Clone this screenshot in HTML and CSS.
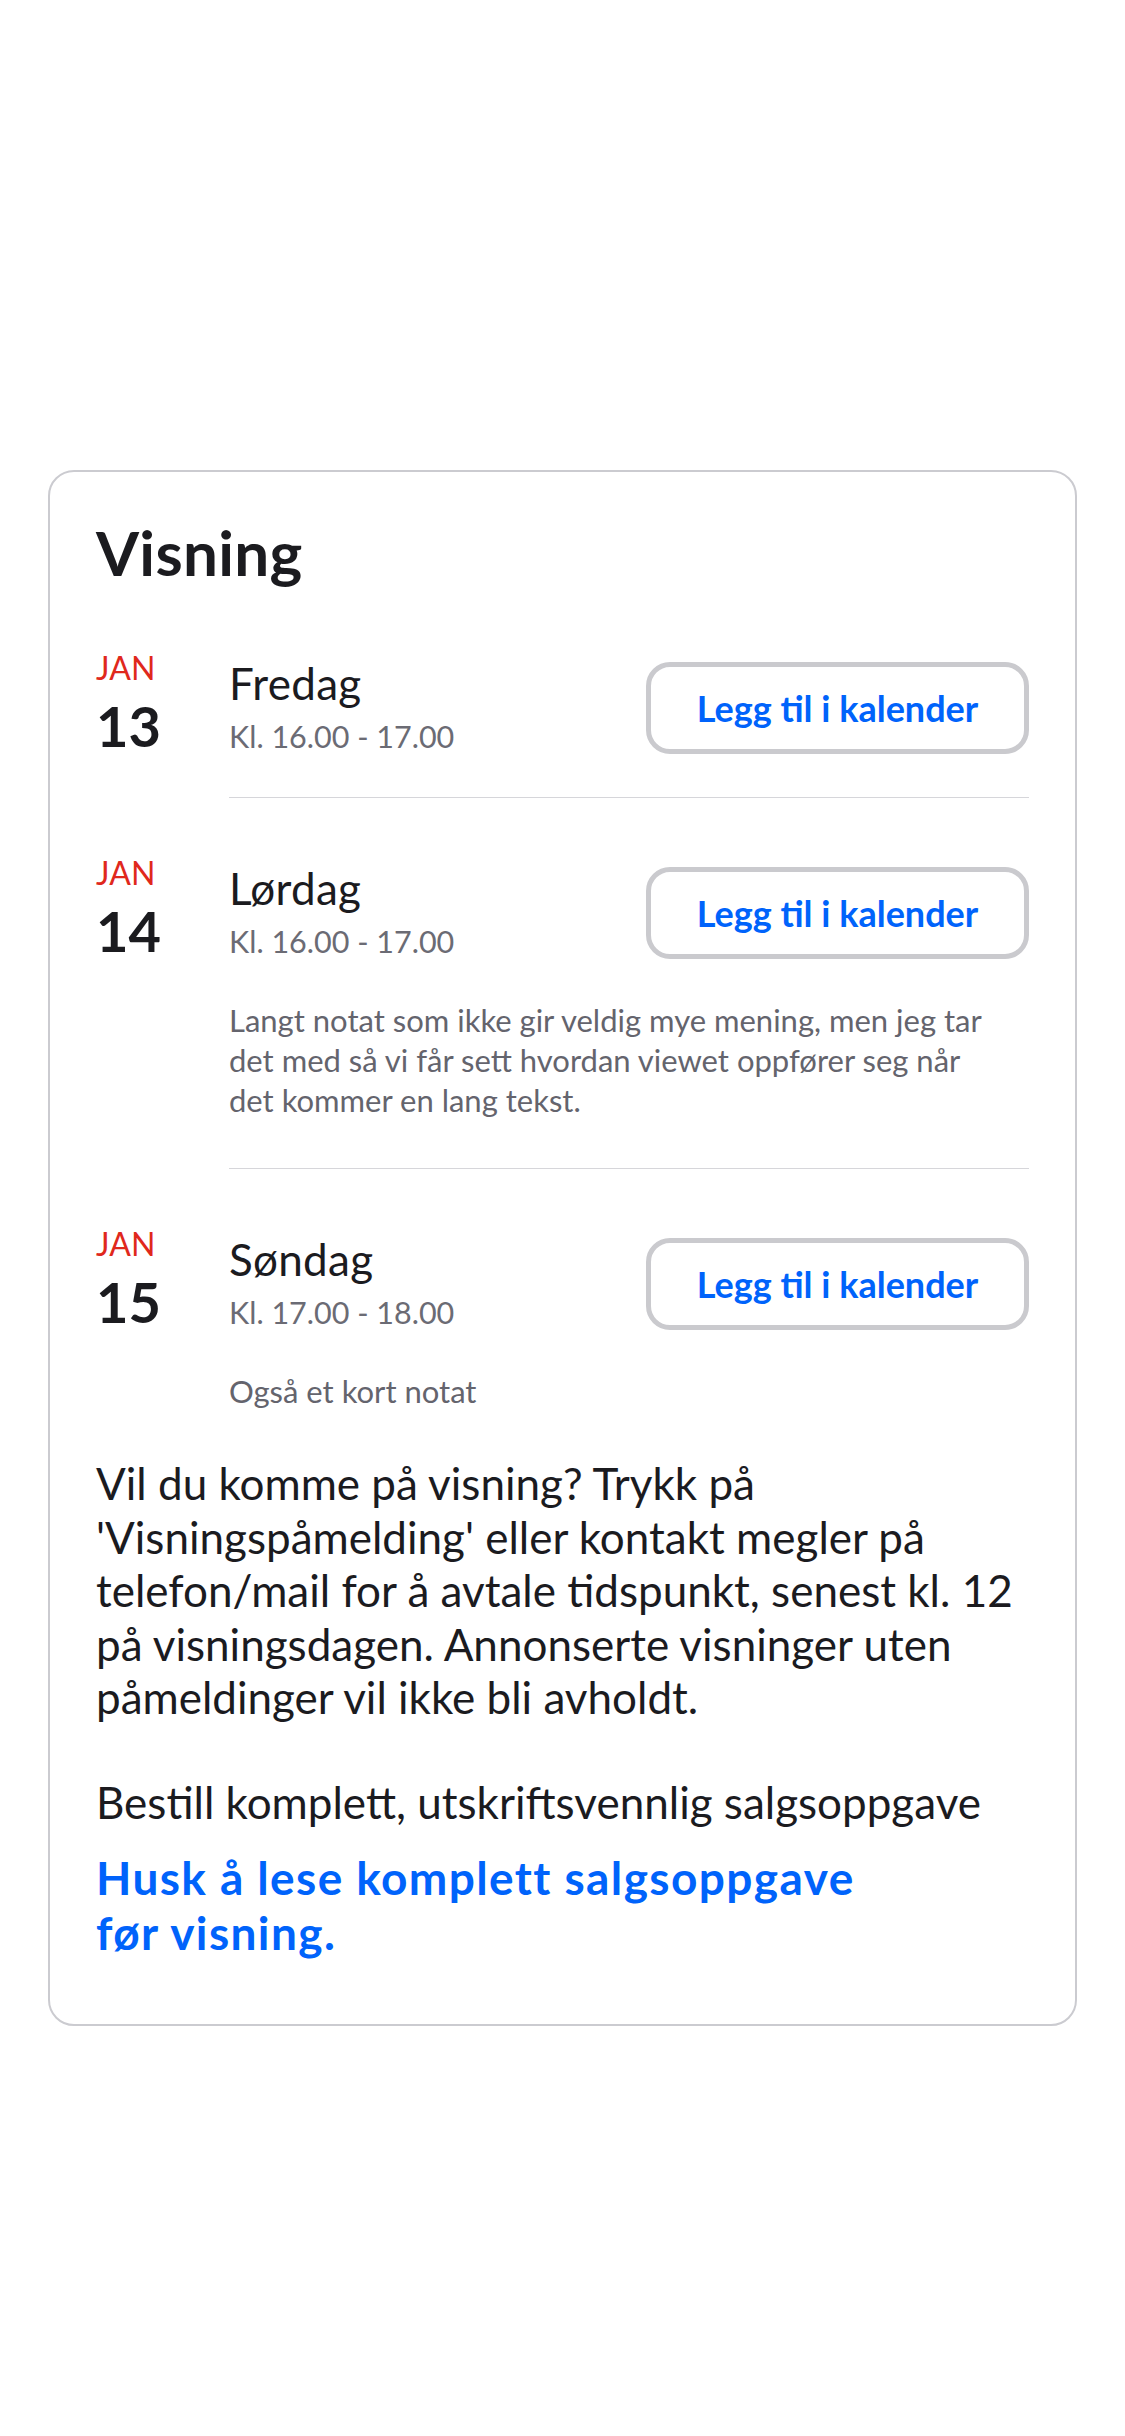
FILE: index.html
```html
<!DOCTYPE html>
<html lang="no">
<head>
<meta charset="utf-8">
<title>Visning</title>
<link rel="stylesheet" href="styles.css">
</head>
<body>
<main class="page">
  <section class="card">
    <h2 class="title">Visning</h2>
    <div class="viewings">
      <div class="viewing">
        <div class="date"><span class="month">JAN</span><span class="day">13</span></div>
        <div class="body">
          <div class="top">
            <div class="info">
              <div class="weekday">Fredag</div>
              <div class="time">Kl. 16.00 - 17.00</div>
            </div>
            <button class="cal-btn" type="button">Legg til i kalender</button>
          </div>
        </div>
      </div>
      <div class="viewing">
        <div class="date"><span class="month">JAN</span><span class="day">14</span></div>
        <div class="body">
          <div class="top">
            <div class="info">
              <div class="weekday">Lørdag</div>
              <div class="time">Kl. 16.00 - 17.00</div>
            </div>
            <button class="cal-btn" type="button">Legg til i kalender</button>
          </div>
          <p class="note">Langt notat som ikke gir veldig mye mening, men jeg tar det med så vi får sett hvordan viewet oppfører seg når det kommer en lang tekst.</p>
        </div>
      </div>
      <div class="viewing">
        <div class="date"><span class="month">JAN</span><span class="day">15</span></div>
        <div class="body">
          <div class="top">
            <div class="info">
              <div class="weekday">Søndag</div>
              <div class="time">Kl. 17.00 - 18.00</div>
            </div>
            <button class="cal-btn" type="button">Legg til i kalender</button>
          </div>
          <p class="note">Også et kort notat</p>
        </div>
      </div>
    </div>
    <p class="desc">Vil du komme på visning? Trykk på 'Visningspåmelding' eller kontakt megler på telefon/mail for å avtale tidspunkt, senest kl. 12 på visningsdagen. Annonserte visninger uten påmeldinger vil ikke bli avholdt.</p>
    <p class="order">Bestill komplett, utskriftsvennlig salgsoppgave</p>
    <a class="remember" href="#">Husk å lese komplett salgsoppgave<br>før visning.</a>
  </section>
</main>
</body>
</html>
```
FILE: styles.css
```css
html, body {
  margin: 0;
  padding: 0;
  background: #ffffff;
}

body {
  font-family: "Lato", "Liberation Sans", sans-serif;
  color: #1b1b1f;
}

.page {
  padding: 470px 48px 0;
}

.card {
  border: 2px solid #cbcbd0;
  border-radius: 26px;
  padding: 44px 46px 64px;
}

.title {
  margin: 0;
  font-size: 62px;
  line-height: 72px;
  font-weight: 700;
  letter-spacing: 0.3px;
  color: #1b1b1f;
}

.viewings {
  display: flex;
  flex-direction: column;
  gap: 55px;
  margin-top: 60px;
}

.viewing {
  display: flex;
}

.date {
  width: 133px;
  flex: none;
  display: flex;
  flex-direction: column;
}

.month {
  font-size: 32px;
  line-height: 40px;
  color: #e0281c;
  font-weight: 400;
}

.day {
  margin-top: 8px;
  font-size: 56px;
  line-height: 60px;
  font-weight: 700;
  color: #1b1b1f;
}

.body {
  flex: 1;
  padding-bottom: 41px;
  border-bottom: 1px solid #d6d6da;
}

.viewing:last-child .body {
  border-bottom: none;
  padding-bottom: 39px;
}

.top {
  display: flex;
  justify-content: space-between;
  align-items: flex-start;
}

.info {
  padding-top: 9px;
}

.weekday {
  font-size: 44px;
  line-height: 52px;
  letter-spacing: 0.3px;
  color: #1b1b1f;
}

.time {
  margin-top: 7px;
  font-size: 30.5px;
  line-height: 40px;
  color: #6b6b74;
}

.cal-btn {
  margin-top: 14px;
  width: 383px;
  height: 92px;
  box-sizing: border-box;
  border: 5px solid #cacace;
  border-radius: 24px;
  background: #ffffff;
  font-family: inherit;
  font-size: 36px;
  font-weight: 700;
  color: #0063fb;
  padding: 0;
}

.note {
  margin: 39px 18px 7px 0;
  font-size: 31px;
  line-height: 40px;
  color: #64646d;
}

.desc {
  margin: 0;
  font-size: 44px;
  line-height: 53.5px;
  color: #1b1b1f;
}

.order {
  margin: 50px 0 0;
  font-size: 44px;
  line-height: 54px;
  color: #1b1b1f;
}

.remember {
  display: block;
  margin-top: 21px;
  font-size: 46px;
  line-height: 55px;
  font-weight: 700;
  letter-spacing: 1.4px;
  color: #0063fb;
  text-decoration: none;
}
```
